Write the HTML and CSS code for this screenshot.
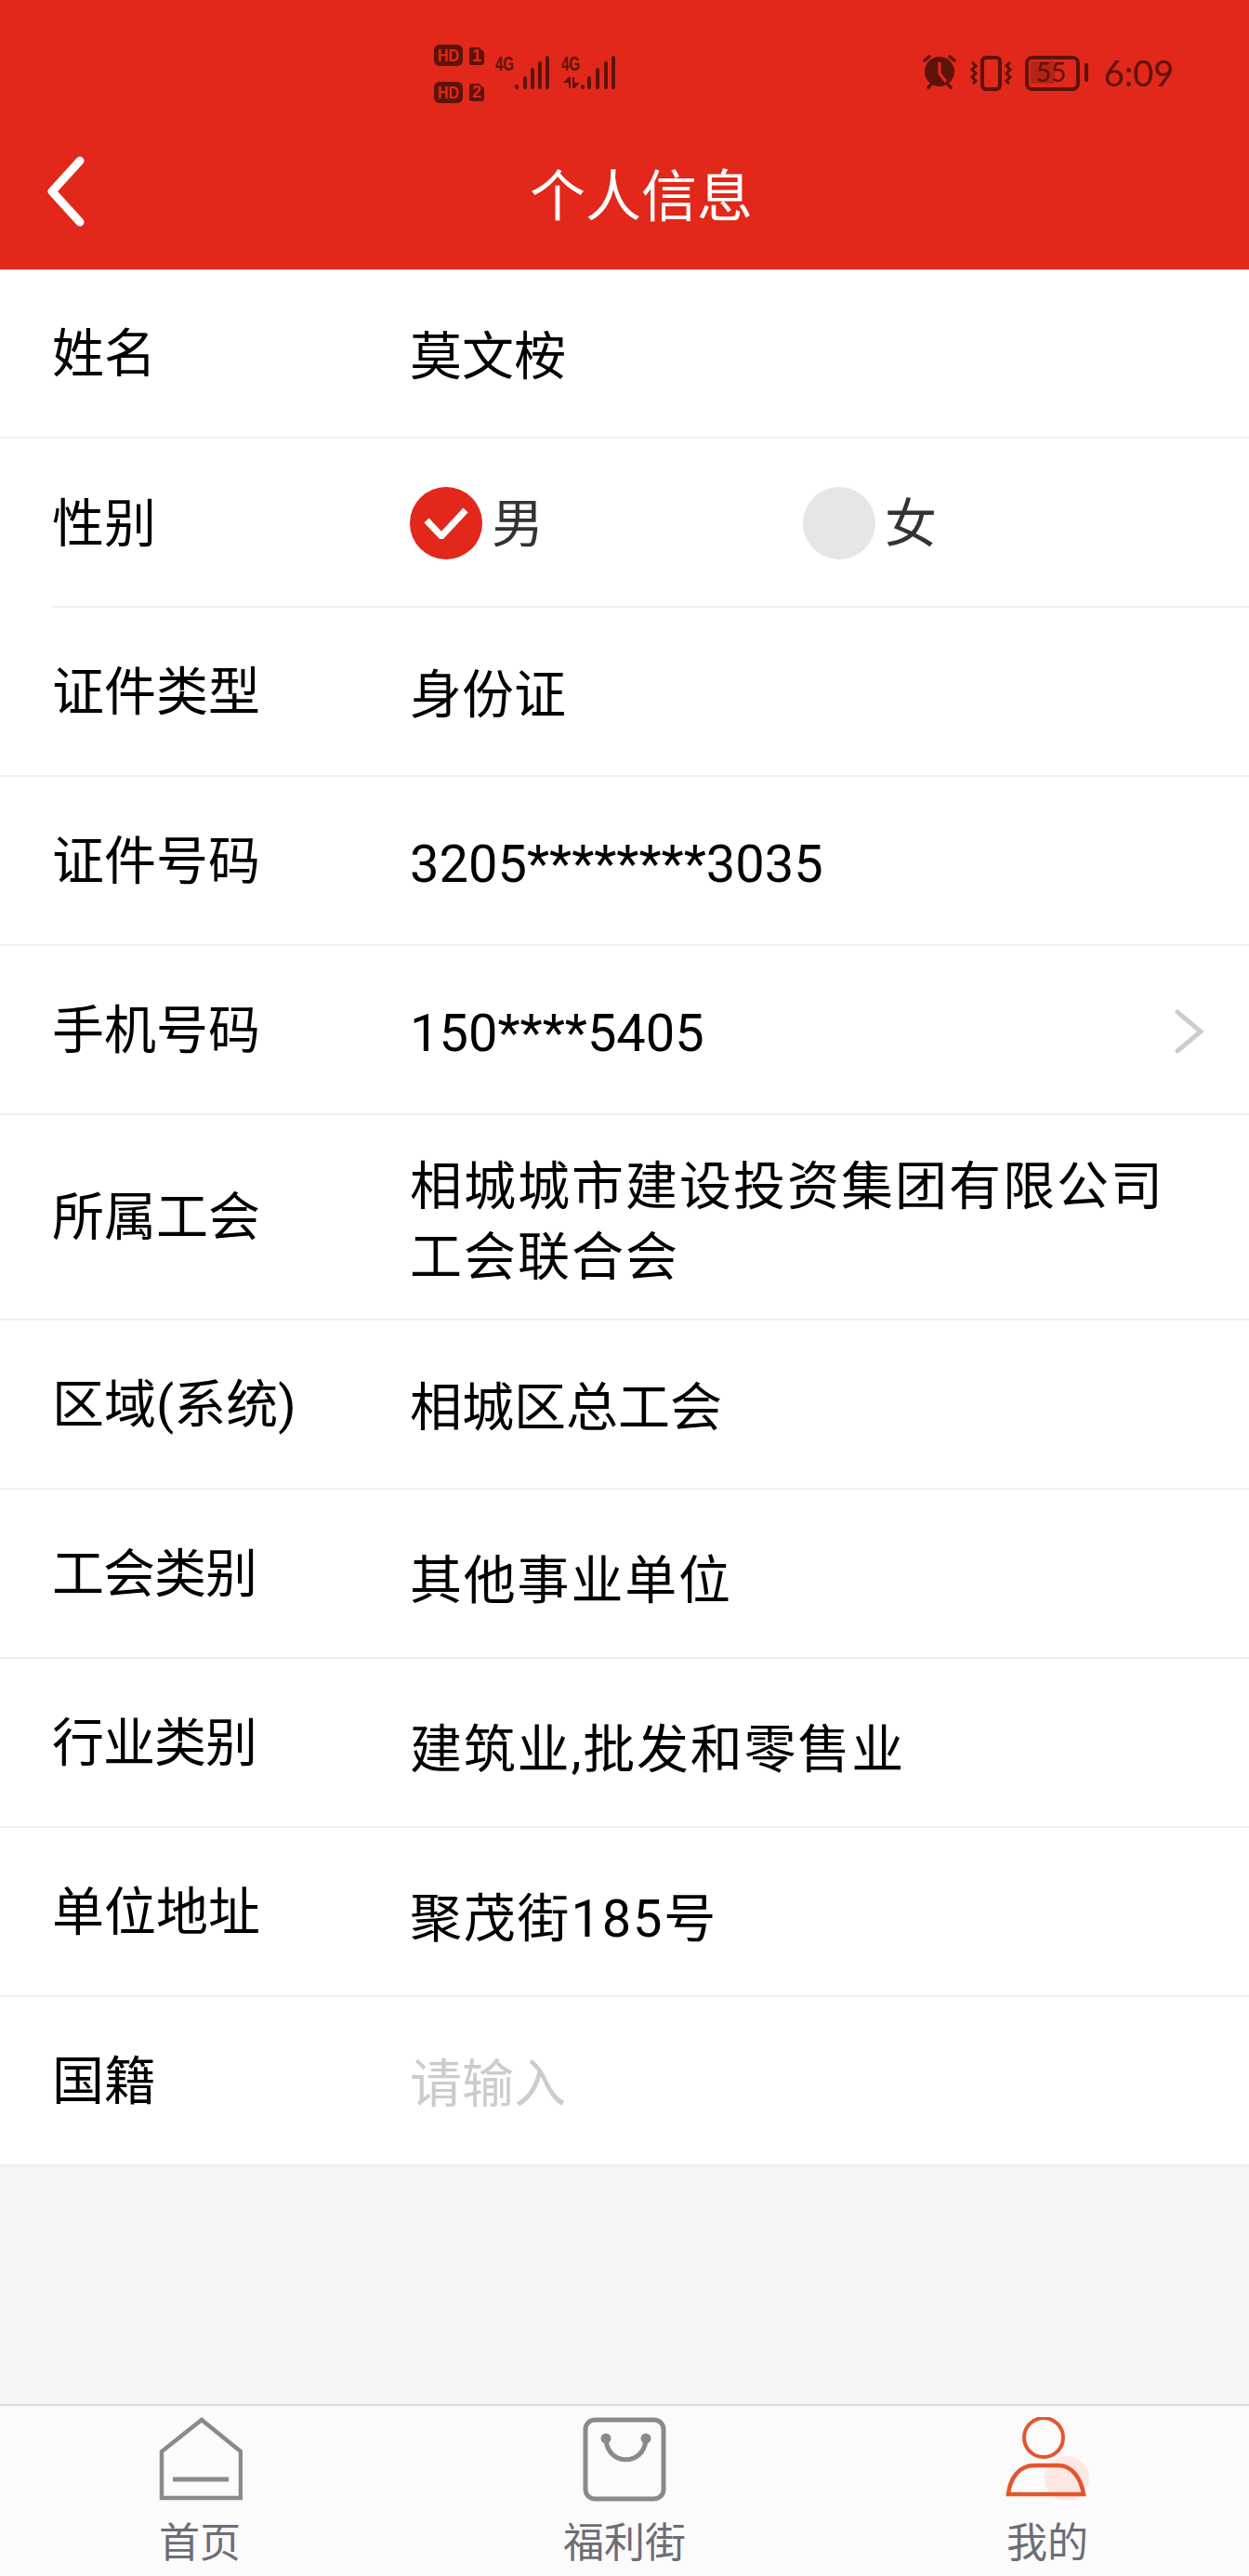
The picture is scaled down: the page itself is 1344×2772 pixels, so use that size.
FILE: index.html
```html
<!DOCTYPE html>
<html lang="zh-CN">

<head>
    <meta charset="UTF-8">
    <meta name="viewport" content="width=device-width, initial-scale=1.0">
    <title>个人信息</title>
    <link rel="stylesheet" href="styles.css">
</head>

<body>
    <div class="page">
        <!-- red top: phone status bar and title -->
        <header class="top">
            <div class="status">
                <svg width="200" height="64" viewBox="0 0 200 64">
                    <rect x="2" y="0" width="31" height="23" rx="6" fill="#5e130a"/>
                    <text x="17.500" y="18" class="hd" textLength="23" lengthAdjust="spacingAndGlyphs">HD</text>
                    <path d="M43 3h7l6 5v11a3 3 0 0 1-3 3H43a3 3 0 0 1-3-3V6a3 3 0 0 1 3-3z" fill="#5e130a"/>
                    <text x="48" y="18" class="hd">1</text>
                    <rect x="2" y="40" width="31" height="23" rx="6" fill="#5e130a"/>
                    <text x="17.500" y="58" class="hd" textLength="23" lengthAdjust="spacingAndGlyphs">HD</text>
                    <path d="M43 42h7l6 5v11a3 3 0 0 1-3 3H43a3 3 0 0 1-3-3V45a3 3 0 0 1 3-3z" fill="#5e130a"/>
                    <text x="48" y="57" class="hd">2</text>
                    <text x="78" y="28" class="net" textLength="20" lengthAdjust="spacingAndGlyphs">4G</text>
                    <text x="149" y="28" class="net" textLength="20" lengthAdjust="spacingAndGlyphs">4G</text>
                    <g stroke="#5e130a" stroke-width="4" stroke-linecap="round">
                        <path d="M91 45v1M100 36v10M108 27v19M116 20v26M124 14v32"/>
                        <path d="M162 45v1M169 36v10M178 27v19M187 20v26M195 14v32"/>
                    </g>
                    <path d="M147 47V41h-6l6-6h2v12zM151 35v12h2l6-6h-6v-6z" fill="#5e130a"/>
                </svg>
                <div class="status-right">
                    <svg width="185" height="44" viewBox="0 0 185 44">
                        <!-- alarm -->
                        <circle cx="23" cy="21" r="16" fill="#5e130a"/>
                        <path d="M23 11v12l7 9" fill="none" stroke="#e1281a" stroke-width="3"/>
                        <path d="M7 9l5-4M39 9l-5-4M11 38l3-3M35 38l-3-3" stroke="#5e130a" stroke-width="3.500" stroke-linecap="round"/>
                        <!-- vibrate -->
                        <rect x="69" y="6" width="19" height="34" rx="4" fill="none" stroke="#5e130a" stroke-width="4"/>
                        <path d="M58 11l4 4-4 4 4 4-4 4 4 4-3 3M99 11l-4 4 4 4-4 4 4 4-4 4 3 3" fill="none" stroke="#5e130a" stroke-width="3"/>
                        <!-- battery -->
                        <rect x="121" y="10" width="26" height="24" rx="2" fill="#b22418"/>
                        <rect x="117" y="6" width="55" height="34" rx="6" fill="none" stroke="#5e130a" stroke-width="4"/>
                        <rect x="179" y="12" width="4" height="20" rx="2" fill="#5e130a"/>
                        <text x="143" y="32" class="bat-num">55</text>
                    </svg>
                    <span class="clock">6:09</span>
                </div>
            </div>
            <div class="titlebar">
                <svg class="back" width="44" height="76" viewBox="0 0 44 76">
                    <path d="M36 5L6 38l30 33" fill="none" stroke="#fff" stroke-width="9" stroke-linecap="round" stroke-linejoin="round"/>
                </svg>
                <h1 class="title">个人信息</h1>
            </div>
        </header>

        <main class="list">
            <div class="row">
                <span class="label">姓名</span>
                <span class="value">莫文桉</span>
            </div>
            <div class="row row-inset">
                <span class="label">性别</span>
                <div class="radios">
                    <div class="radio">
                        <span class="dot dot-on">
                            <svg width="48" height="34" viewBox="0 0 48 34">
                                <path d="M3 14l16 17L45 3" fill="none" stroke="#fff" stroke-width="7"/>
                            </svg>
                        </span>
                        <span class="radio-text">男</span>
                    </div>
                    <div class="radio">
                        <span class="dot"></span>
                        <span class="radio-text">女</span>
                    </div>
                </div>
            </div>
            <div class="row">
                <span class="label">证件类型</span>
                <span class="value">身份证</span>
            </div>
            <div class="row">
                <span class="label">证件号码</span>
                <span class="value value-num">3205********3035</span>
            </div>
            <div class="row">
                <span class="label">手机号码</span>
                <span class="value value-num">150****5405</span>
                <svg class="more" width="32" height="48" viewBox="0 0 32 48">
                    <path d="M3 3l25 21L3 45" fill="none" stroke="#ccc" stroke-width="5" stroke-linecap="round"/>
                </svg>
            </div>
            <div class="row row-tall">
                <span class="label">所属工会</span>
                <span class="value value-wrap">相城城市建设投资集团有限公司<br>工会联合会</span>
            </div>
            <div class="row">
                <span class="label">区域(系统)</span>
                <span class="value">相城区总工会</span>
            </div>
            <div class="row">
                <span class="label label-narrow">工会类别</span>
                <span class="value value-wide">其他事业单位</span>
            </div>
            <div class="row">
                <span class="label label-narrow">行业类别</span>
                <span class="value value-wide">建筑业,批发和零售业</span>
            </div>
            <div class="row">
                <span class="label">单位地址</span>
                <span class="value value-wide">聚茂街185号</span>
            </div>
            <div class="row">
                <span class="label">国籍</span>
                <span class="value placeholder">请输入</span>
            </div>
        </main>

        <!-- bottom tabs -->
        <nav class="tabs">
            <div class="tab">
                <svg width="92" height="92" viewBox="0 0 92 92">
                    <path d="M5 87V37L48 3l42 34v50z" fill="none" stroke="#8a8a8c" stroke-width="4.500"/>
                    <path d="M17 67h60" stroke="#8a8a8c" stroke-width="5"/>
                </svg>
                <span>首页</span>
            </div>
            <div class="tab">
                <svg width="92" height="92" viewBox="0 0 92 92">
                    <rect x="4" y="3" width="84" height="85" rx="10" fill="none" stroke="#8a8a8c" stroke-width="5"/>
                    <path d="M26 24c2 29 41 29 43 0" fill="none" stroke="#8a8a8c" stroke-width="5"/>
                    <circle cx="26" cy="23" r="5.500" fill="#8a8a8c"/>
                    <circle cx="69" cy="23" r="5.500" fill="#8a8a8c"/>
                </svg>
                <span>福利街</span>
            </div>
            <div class="tab">
                <svg width="92" height="92" viewBox="0 0 92 92">
                    <circle cx="67" cy="66" r="24" fill="#fde8e4"/>
                    <circle cx="42" cy="22" r="21" fill="none" stroke="#e4552e" stroke-width="4"/>
                    <path d="M4 83c2-18 12-31 28-31h26c14 0 24 13 27 31z" fill="none" stroke="#e4552e" stroke-width="4.500"/>
                </svg>
                <span>我的</span>
            </div>
        </nav>
    </div>
</body>

</html>
```

FILE: styles.css
```css
* {
    box-sizing: border-box;
}

body {
    margin: 0;
    background: #f5f5f5;
    font-family: Roboto, "Noto Sans CJK SC", sans-serif;
}

.page {
    display: flex;
    flex-direction: column;
    height: 2772px;
}

/* red top */
.top {
    height: 290px;
    background: #e1281a;
}

.status {
    display: flex;
    justify-content: space-between;
    align-items: flex-start;
    height: 160px;
    padding: 48px 81px 0 465px;
}

.status-right {
    display: flex;
    align-items: center;
    gap: 14px;
    margin-top: 8px;
}

.hd {
    fill: #e1281a;
    font-family: "Liberation Sans", sans-serif;
    font-size: 18px;
    font-weight: 700;
    text-anchor: middle;
}

.net {
    fill: #5e130a;
    font-family: "Liberation Sans", sans-serif;
    font-size: 22px;
    font-weight: 700;
    text-anchor: middle;
}

.bat-num {
    fill: #5e130a;
    font-family: Lato, sans-serif;
    font-size: 28px;
    text-anchor: middle;
}

.clock {
    color: #5e130a;
    font-family: Lato, sans-serif;
    font-size: 38px;
    line-height: 44px;
}

.titlebar {
    display: flex;
    align-items: center;
    height: 110px;
    margin-top: -12px;
    padding-left: 50px;
}

.back {
    margin-top: 6px;
}

.title {
    margin: 20px 0 0 476px;
    color: #fff;
    font-size: 60px;
    font-weight: 400;
    line-height: 1;
}

/* rows */
.list {
    background: #fff;
}

.row {
    display: flex;
    align-items: center;
    height: 182px;
    padding-left: 56px;
    border-bottom: 2px solid #efefef;
    color: #000;
    font-size: 56px;
}

.row-tall {
    height: 221px;
}

.row-inset {
    border-bottom: 0;
    background: linear-gradient(#efefef, #efefef) no-repeat 56px 100% / 100% 2px;
}

.label {
    flex: 0 0 385px;
    margin-top: -10px;
}

.label-narrow {
    letter-spacing: -1px;
}

.value {
    margin-top: -3px;
}

.value-num {
    margin-top: 8px;
}

.value-wide {
    margin-top: 4px;
    letter-spacing: 1.800px;
}

.value-wrap {
    line-height: 76px;
    letter-spacing: 2px;
    margin-top: 11px;
}

.placeholder {
    color: #ccc;
}

.radios {
    display: flex;
}

.radio {
    display: flex;
    align-items: center;
    gap: 10px;
    width: 423px;
    color: #333;
}

.radio-text {
    margin-top: -10px;
}

.dot {
    display: flex;
    justify-content: center;
    align-items: center;
    width: 78px;
    height: 78px;
    border-radius: 50%;
    background: #e5e6e8;
}

.dot-on {
    background: #e1281a;
}

.more {
    margin: 4px 48px 0 auto;
}

/* tabs */
.tabs {
    display: grid;
    grid-template-columns: 430px 484px 426px;
    height: 185px;
    margin-top: auto;
    padding-top: 12px;
    border-top: 2px solid #dcdcdc;
    background: #fbfbfb;
}

.tab {
    display: flex;
    flex-direction: column;
    align-items: center;
    gap: 14px;
    color: #6c6d78;
    font-size: 44px;
    line-height: 60px;
}
```
